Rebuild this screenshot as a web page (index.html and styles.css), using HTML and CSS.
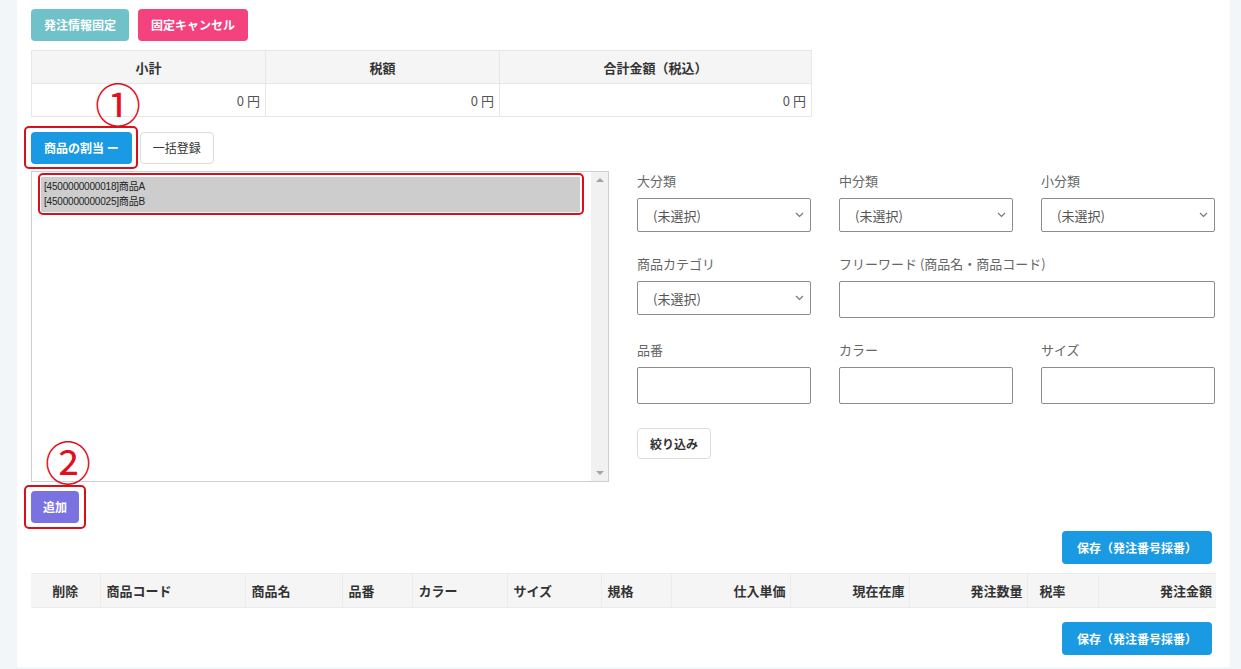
FILE: index.html
```html
<!DOCTYPE html>
<html lang="ja">
<head>
<meta charset="utf-8">
<title>発注</title>
<link rel="stylesheet" href="styles.css">
</head>
<body>
<div class="page">
  <div class="card">
    <div class="btn-row">
      <button class="btn btn-teal">発注情報固定</button>
      <button class="btn btn-pink">固定キャンセル</button>
    </div>

    <table class="summary">
      <thead>
        <tr><th class="c1">小計</th><th class="c2">税額</th><th class="c3">合計金額（税込）</th></tr>
      </thead>
      <tbody>
        <tr><td>0 円</td><td>0 円</td><td>0 円</td></tr>
      </tbody>
    </table>

    <div class="btn-row assign-row">
      <button class="btn btn-blue">商品の割当 ー</button>
      <button class="btn btn-light">一括登録</button>
    </div>

    <div class="assign-area">
      <div class="left-col">
        <div class="listbox">
          <div class="list">
            <div class="sel-group">
              <div class="opt">[4500000000018]商品A</div>
              <div class="opt">[4500000000025]商品B</div>
            </div>
          </div>
          <div class="scrollbar">
            <span class="arrow up"></span>
            <span class="arrow down"></span>
          </div>
        </div>
        <button class="btn btn-purple">追加</button>
      </div>

      <div class="filters">
        <div class="field">
          <label class="lbl">大分類</label>
          <div class="select"><span>(未選択)</span><svg class="chev" width="9" height="6" viewBox="0 0 9 6"><polyline points="1,1 4.5,4.5 8,1" fill="none" stroke="#777" stroke-width="1.2"/></svg></div>
        </div>
        <div class="field">
          <label class="lbl">中分類</label>
          <div class="select"><span>(未選択)</span><svg class="chev" width="9" height="6" viewBox="0 0 9 6"><polyline points="1,1 4.5,4.5 8,1" fill="none" stroke="#777" stroke-width="1.2"/></svg></div>
        </div>
        <div class="field">
          <label class="lbl">小分類</label>
          <div class="select"><span>(未選択)</span><svg class="chev" width="9" height="6" viewBox="0 0 9 6"><polyline points="1,1 4.5,4.5 8,1" fill="none" stroke="#777" stroke-width="1.2"/></svg></div>
        </div>

        <div class="field">
          <label class="lbl">商品カテゴリ</label>
          <div class="select"><span>(未選択)</span><svg class="chev" width="9" height="6" viewBox="0 0 9 6"><polyline points="1,1 4.5,4.5 8,1" fill="none" stroke="#777" stroke-width="1.2"/></svg></div>
        </div>
        <div class="field span2">
          <label class="lbl">フリーワード (商品名・商品コード)</label>
          <div class="input"></div>
        </div>

        <div class="field">
          <label class="lbl">品番</label>
          <div class="input"></div>
        </div>
        <div class="field">
          <label class="lbl">カラー</label>
          <div class="input"></div>
        </div>
        <div class="field">
          <label class="lbl">サイズ</label>
          <div class="input"></div>
        </div>

        <div class="field">
          <button class="btn btn-light btn-filter">絞り込み</button>
        </div>
      </div>
    </div>

    <div class="save-row first">
      <button class="btn btn-blue btn-save">保存（発注番号採番）</button>
    </div>

    <table class="items">
      <thead>
        <tr>
          <th class="w-del center">削除</th>
          <th class="w-code">商品コード</th>
          <th class="w-name">商品名</th>
          <th class="w-no">品番</th>
          <th class="w-color">カラー</th>
          <th class="w-size">サイズ</th>
          <th class="w-spec">規格</th>
          <th class="w-price right">仕入単価</th>
          <th class="w-stock right">現在在庫</th>
          <th class="w-qty right">発注数量</th>
          <th class="w-tax tax">税率</th>
          <th class="w-amt right">発注金額</th>
        </tr>
      </thead>
      <tbody></tbody>
    </table>

    <div class="save-row second">
      <button class="btn btn-blue btn-save">保存（発注番号採番）</button>
    </div>

    <div class="anno num n1">①</div>
    <div class="anno num n2">②</div>
    <div class="anno box b1"></div>
    <div class="anno box b2"></div>
    <div class="anno box b3"></div>
  </div>
</div>
</body>
</html>
```

FILE: styles.css
```css
* { box-sizing: border-box; }

html, body {
  margin: 0;
  padding: 0;
}

body {
  background: #f3f6f9;
  font-family: "Noto Sans CJK JP", "Noto Sans", sans-serif;
  color: #333;
  font-size: 13px;
}

.page {
  padding-left: 17px;
  width: 1241px;
  height: 669px;
  overflow: hidden;
}

.card {
  position: relative;
  width: 1213px;
  background: #fff;
  padding: 9px 14px 12px 14px;
}

.btn {
  font-family: "Noto Sans CJK JP", sans-serif;
  height: 32px;
  border: 0;
  border-radius: 4px;
  padding: 0 13px;
  font-size: 12px;
  font-weight: 700;
  color: #fff;
  line-height: 32px;
  cursor: pointer;
  white-space: nowrap;
  vertical-align: top;
}

.btn-row {
  display: flex;
  gap: 9px;
}

.btn-teal { background: #6fc1ca; }
.btn-pink { background: #f4427e; }
.btn-blue { background: #1a9ae3; }
.btn-purple { background: #7b72e2; padding: 0 12px; }
.btn-light {
  background: #fff;
  color: #333;
  border: 1px solid #dcdcdc;
  font-weight: 400;
  padding: 0 12px;
  line-height: 30px;
}

/* summary */
.summary {
  margin-top: 9px;
  border-collapse: collapse;
  width: 780px;
  table-layout: fixed;
}
.summary th, .summary td {
  border: 1px solid #e7e7e7;
  height: 33px;
  padding: 0 5px;
  font-size: 13px;
}
.summary th {
  background: #f5f5f5;
  font-weight: 700;
  text-align: center;
  color: #333;
}
.summary td {
  text-align: right;
  color: #555;
}
.summary .c1 { width: 234px; }
.summary .c2 { width: 234px; }
.summary .c3 { width: 312px; }

.assign-row {
  margin-top: 15px;
  gap: 8px;
}

/* assign area */
.assign-area {
  margin-top: 7px;
  display: flex;
  gap: 28px;
  align-items: flex-start;
}

.left-col {
  display: flex;
  flex-direction: column;
  align-items: flex-start;
  gap: 9px;
}

.listbox {
  width: 578px;
  height: 311px;
  border: 1px solid #cfcfcf;
  display: flex;
}

.list {
  flex: 1;
  padding: 5px 11px 0 9px;
}

.sel-group {
  background: #cdcdcd;
  padding: 2px 3px 3px 3px;
}

.opt {
  font-family: "Liberation Sans", "Noto Sans CJK JP", sans-serif;
  font-size: 10px;
  line-height: 15px;
  color: #222;
  letter-spacing: -0.2px;
}

.scrollbar {
  width: 17px;
  background: #f1f1f1;
  display: flex;
  flex-direction: column;
  justify-content: space-between;
  align-items: center;
  padding: 6px 0;
}

.arrow {
  width: 0;
  height: 0;
  border-left: 4px solid transparent;
  border-right: 4px solid transparent;
}
.arrow.up { border-bottom: 4px solid #a3a3a3; }
.arrow.down { border-top: 4px solid #a3a3a3; }

/* filters */
.filters {
  display: grid;
  grid-template-columns: 174px 174px 174px;
  column-gap: 28px;
  row-gap: 22px;
}

.field {
  display: flex;
  flex-direction: column;
  align-items: flex-start;
}
.span2 { grid-column: span 2; }

.lbl {
  font-size: 13px;
  color: #666;
  line-height: 20px;
  margin-bottom: 7px;
}

.select {
  width: 100%;
  height: 34px;
  border: 1px solid #8c8c8c;
  border-radius: 2px;
  display: flex;
  align-items: center;
  justify-content: space-between;
  padding: 0 6px 0 15px;
  font-size: 13px;
  color: #555;
}

.input {
  width: 100%;
  height: 37px;
  border: 1px solid #8c8c8c;
  border-radius: 2px;
  background: #fff;
}

.btn-filter {
  margin-top: 2px;
  height: 31px;
  line-height: 29px;
  font-weight: 700;
  color: #333;
}

/* save rows */
.save-row {
  display: flex;
  justify-content: flex-end;
  padding-right: 4px;
}
.save-row.first { margin-top: 8px; }
.save-row.second { margin-top: 14px; }

.btn-save {
  height: 33px;
  line-height: 33px;
  padding: 0 15px;
}

/* items table */
.items {
  margin-top: 9px;
  width: 1185px;
  border-collapse: collapse;
  table-layout: fixed;
}
.items th {
  height: 34px;
  background: #f5f5f5;
  border-top: 1px solid #ececec;
  border-bottom: 1px solid #ececec;
  border-left: 1px solid #ececec;
  font-size: 13px;
  font-weight: 700;
  color: #333;
  text-align: left;
  padding: 0 6px;
  white-space: nowrap;
}
.items th:first-child { border-left: 0; }
.items th.center { text-align: center; }
.items th.right { text-align: right; padding-right: 4px; }
.items th.tax { padding-left: 12px; }

.w-del { width: 69px; }
.w-code { width: 145px; }
.w-name { width: 97px; }
.w-no { width: 70px; }
.w-color { width: 95px; }
.w-size { width: 94px; }
.w-spec { width: 70px; }
.w-price { width: 119px; }
.w-stock { width: 119px; }
.w-qty { width: 118px; }
.w-tax { width: 71px; }
.w-amt { width: 118px; }

/* annotations */
.anno { position: absolute; pointer-events: none; }

.num {
  color: #e0101e;
  font-family: "Noto Sans CJK JP", sans-serif;
  font-size: 46px;
  line-height: 46px;
  font-weight: 400;
}
.n1 { left: 78px; top: 79px; }
.n2 { left: 28px; top: 437px; }

.box {
  border: 2.5px solid #d9101c;
  border-radius: 5px;
}
.b1 { left: 7px; top: 126px; width: 114px; height: 43px; }
.b2 { left: 21px; top: 173px; width: 546px; height: 42px; }
.b3 { left: 7px; top: 485px; width: 62px; height: 44px; }
```
